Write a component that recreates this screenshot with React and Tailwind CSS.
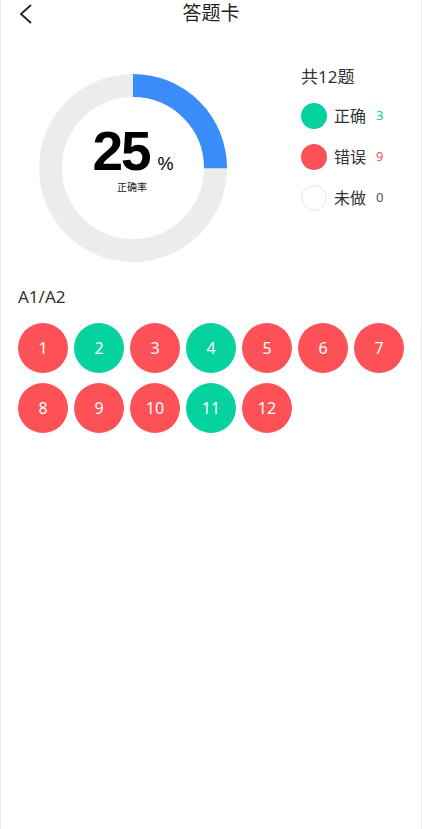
import React from "react";

const results = ["w", "r", "w", "r", "w", "w", "w", "w", "w", "w", "r", "w"];

const Donut = () => {
  const r = 82.5;
  const c = 2 * Math.PI * r;
  return (
    <div className="relative w-[188px] h-[188px]">
      <svg width="188" height="188" viewBox="0 0 188 188">
        <circle cx="94" cy="94" r={r} fill="none" stroke="#ececec" strokeWidth="23" />
        <circle
          cx="94"
          cy="94"
          r={r}
          fill="none"
          stroke="#3a8df8"
          strokeWidth="23"
          strokeDasharray={`${c * 0.25} ${c}`}
          transform="rotate(-90 94 94)"
        />
      </svg>
      <div className="absolute inset-0 flex flex-col items-center pt-[52px]">
        <div className="flex items-baseline">
          <span className="text-[55px] leading-[50px] font-bold text-black tracking-[-2px] font-['Liberation_Sans',sans-serif]">25</span>
          <span className="text-[18px] leading-none text-black ml-[8px] font-['Liberation_Sans',sans-serif]">%</span>
        </div>
        <span className="text-[10px] leading-[12px] text-[#222] mt-[5px] ml-[-2px]">正确率</span>
      </div>
    </div>
  );
};

const LegendRow = ({ dot, label, count, countColor }) => (
  <div className="flex items-center h-[26px]">
    <span className={`w-[26px] h-[26px] rounded-full ${dot}`} />
    <span className="ml-[7px] text-[16px] text-[#333]">{label}</span>
    <span className={`ml-[10px] text-[13px] ${countColor}`}>{count}</span>
  </div>
);

const App = () => {
  return (
    <div className="min-h-[829px] bg-white border-x border-[#ececec] font-['Noto_Sans','Noto_Sans_CJK_SC',sans-serif]">
      {/* Header */}
      <div className="relative h-[30px] flex items-center justify-center">
        <svg className="absolute left-[17px] top-[3px]" width="16" height="22" viewBox="0 0 16 22">
          <path d="M13 2 L3 11 L13 20" fill="none" stroke="#222" strokeWidth="1.8" />
        </svg>
        <h1 className="text-[19px] text-[#222] mt-[-3px]">答题卡</h1>
      </div>

      {/* Summary */}
      <div className="flex pt-[44px] pl-[38px]">
        <Donut />
        <div className="ml-[74px] mt-[-8px]">
          <div className="text-[17px] text-[#333] leading-[20px] mt-[1px]">共12题</div>
          <div className="flex flex-col gap-[15px] mt-[16px]">
            <LegendRow dot="bg-[#06d29f]" label="正确" count="3" countColor="text-[#06d29f]" />
            <LegendRow dot="bg-[#fc5257]" label="错误" count="9" countColor="text-[#fc5257]" />
            <LegendRow dot="border border-[#e6e6e6]" label="未做" count="0" countColor="text-[#555]" />
          </div>
        </div>
      </div>

      {/* Section */}
      <div className="px-[17px] mt-[25px]">
        <div className="text-[17px] text-[#333] leading-[20px]">A1/A2</div>
        <div className="grid grid-cols-[repeat(7,50px)] gap-x-[6px] gap-y-[10px] mt-[16px]">
          {results.map((s, i) => (
            <div
              key={i}
              className={`w-[50px] h-[50px] rounded-full flex items-center justify-center text-white text-[16px] ${
                s === "r" ? "bg-[#06d29f]" : "bg-[#fc5257]"
              }`}
            >
              {i + 1}
            </div>
          ))}
        </div>
      </div>
    </div>
  );
};

export default App;
